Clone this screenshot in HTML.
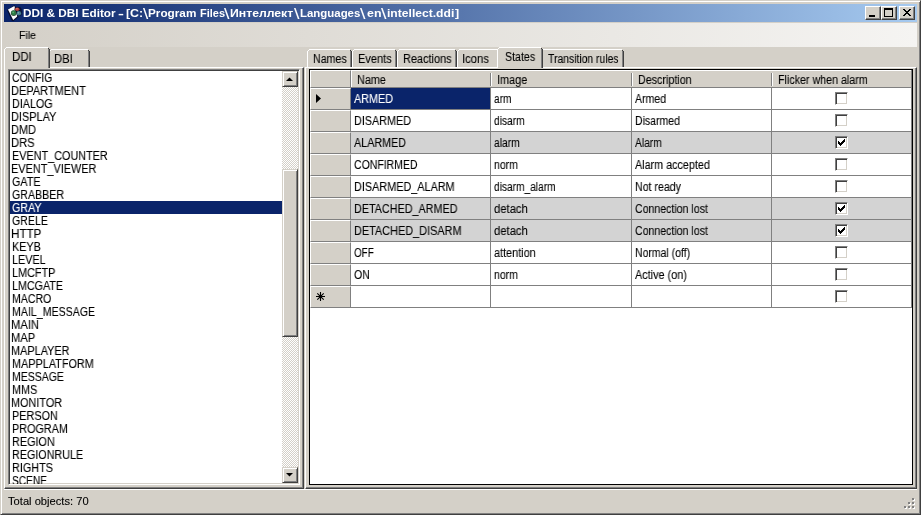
<!DOCTYPE html><html><head><meta charset="utf-8"><title>DDI &amp; DBI Editor</title><style>
*{box-sizing:border-box;margin:0;padding:0}
html,body{width:921px;height:515px;overflow:hidden;background:#d4d0c8}
body{font-family:"Liberation Sans",sans-serif;font-size:12px;color:#000;position:relative;line-height:13px}
.a{position:absolute}
.t{position:absolute;white-space:nowrap;line-height:13px;transform-origin:0 0;will-change:transform;-webkit-text-stroke:.1px}
#ttext{left:0;top:7px;height:13px;white-space:nowrap;font-size:0;line-height:13px;color:#fff}
.ts{display:inline-block;height:13px;line-height:13px;vertical-align:top;white-space:nowrap;transform-origin:0 0;will-change:transform}
#title{left:4px;top:4px;width:913px;height:18px;background:linear-gradient(to right,#0a246a,#a6caf0)}
.cb{position:absolute;top:6px;width:16px;height:14px;background:#d4d0c8;border:1px solid;border-color:#fff #404040 #404040 #fff;box-shadow:inset -1px -1px 0 #808080,inset 1px 1px 0 #d4d0c8}
#menu{left:4px;top:23px;width:913px;height:24px;background:linear-gradient(to right,#d4d0c8,#f5f4f2)}
.tab{position:absolute;background:#d4d0c8;border-top:1px solid #fff;border-left:1px solid #fff;border-right:1px solid #404040;border-radius:2px 2px 0 0;box-shadow:inset -1px 0 0 #808080}
.pane{position:absolute;border:1px solid;border-color:#fff #404040 #404040 #fff;box-shadow:inset -1px -1px 0 #808080}
#list{left:8px;top:69px;width:292px;height:416px;background:#fff;border:1px solid;border-color:#808080 #fff #fff #808080;box-shadow:inset 1px 1px 0 #404040,inset -1px -1px 0 #d4d0c8;overflow:hidden}
.sel{position:absolute;left:1px;width:272px;height:13px;background:#0a246a}
.sbtn{position:absolute;left:273px;width:16px;height:16px;background:#d4d0c8;border:1px solid;border-color:#d4d0c8 #404040 #404040 #d4d0c8;box-shadow:inset 1px 1px 0 #fff,inset -1px -1px 0 #808080}
#track{left:273px;top:1px;width:16px;height:412px;background-image:conic-gradient(#fff 25%,#d4d0c8 0 50%,#fff 0 75%,#d4d0c8 0);background-size:2px 2px}
#grid{left:309px;top:69px;width:604px;height:416px;background:#fff;border:1px solid #000;overflow:hidden}
.hc{position:absolute;background:#d4d0c8;border:1px solid;border-color:#fff #808080 #808080 #fff}
.cell{position:absolute;height:22px;border-right:1px solid #808080;border-bottom:1px solid #808080}
.chk{position:absolute;width:13px;height:13px;background:#fff;border:1px solid;border-color:#808080 #fff #fff #808080;box-shadow:inset 1px 1px 0 #404040,inset -1px -1px 0 #d4d0c8}
</style></head><body>
<div class="a" style="left:0;top:0;width:921px;height:515px;border:1px solid;border-color:#d4d0c8 #404040 #404040 #d4d0c8;box-shadow:inset 1px 1px 0 #fff,inset -1px -1px 0 #808080"></div>
<div class="a" id="title"></div>
<svg class="a" style="left:5px;top:5px" width="18" height="17" viewBox="5 5 18 17">
<polygon points="7,10 14.6,5.3 16.4,8 18.6,17 13.2,21.2 11.6,20.6" fill="#06061a" opacity="0.75"/>
<polygon points="8,9.6 14.4,6 17.2,16.4 13.2,20.1" fill="#fff"/>
<ellipse cx="19.3" cy="11.6" rx="2.6" ry="4.6" fill="#081030" opacity="0.9"/>
<ellipse cx="17.4" cy="9.3" rx="3" ry="2.4" fill="#081030" opacity="0.8"/>
<ellipse cx="17.2" cy="9.2" rx="2.3" ry="1.8" fill="#b4423a"/>
<ellipse cx="16.9" cy="8.8" rx="1.1" ry="0.7" fill="#d8766c"/>
<circle cx="18.8" cy="13.3" r="2.3" fill="#447c8c"/>
<circle cx="18.4" cy="12.8" r="0.9" fill="#7aa8b4"/>
<circle cx="13.7" cy="13.1" r="2.9" fill="#0a2412" opacity="0.8"/>
<circle cx="13.6" cy="12.9" r="2.3" fill="#2c7c42"/>
<circle cx="13.2" cy="12.3" r="0.9" fill="#5eac70"/>
</svg>
<div class="a" id="ttext"><span class="ts" style="margin-left:22.65px;width:95.20px;transform:scaleX(1.0664);font-size:11px;font-weight:bold">DDI &amp; DBI Editor</span> <span class="ts" style="width:8.17px;transform:scaleX(1.6071);font-size:11px;font-weight:bold">-</span> <span class="ts" style="width:16.67px;transform:scaleX(1.1250);font-size:11px;font-weight:bold">[C:</span><span class="ts" style="width:5.35px;transform:scaleX(1.2619);font-size:15px">\</span><span class="ts" style="width:51.55px;transform:scaleX(1.0683);font-size:11px;font-weight:bold">Program</span> <span class="ts" style="width:24.89px;transform:scaleX(0.9916);font-size:11px;font-weight:bold">Files</span><span class="ts" style="width:6.02px;transform:scaleX(1.3095);font-size:15px">\</span><span class="ts" style="width:63.48px;transform:scaleX(1.1109);font-size:11px;font-weight:bold">Интеллект</span><span class="ts" style="width:5.97px;transform:scaleX(1.3095);font-size:15px">\</span><span class="ts" style="width:60.03px;transform:scaleX(1.0387);font-size:11px;font-weight:bold">Languages</span><span class="ts" style="width:7.35px;transform:scaleX(1.3095);font-size:15px">\</span><span class="ts" style="width:14.15px;transform:scaleX(1.1282);font-size:11px;font-weight:bold">en</span><span class="ts" style="width:5.62px;transform:scaleX(1.3095);font-size:15px">\</span><span class="ts" style="width:67.77px;transform:scaleX(1.1007);font-size:11px;font-weight:bold">intellect.ddi</span><span class="ts" style="width:6.00px;transform:scaleX(1.1379);font-size:11px;font-weight:bold">]</span></div>
<div class="cb" style="left:865px"><svg class="a" style="left:0;top:0" width="14" height="12"><rect x="3" y="8" width="6" height="2" fill="#000"/></svg></div>
<div class="cb" style="left:881px"><svg class="a" style="left:0;top:0" width="14" height="12"><rect x="2.5" y="1.5" width="8" height="8" fill="none" stroke="#000" stroke-width="1"/><rect x="2" y="1" width="9" height="2" fill="#000"/></svg></div>
<div class="cb" style="left:899px"><svg class="a" style="left:0;top:0" width="14" height="12" shape-rendering="crispEdges"><path d="M3,2h2v1h-2zM9,2h2v1h-2zM4,3h2v1h-2zM8,3h2v1h-2zM5,4h4v1h-4zM6,5h2v1h-2zM5,6h4v1h-4zM4,7h2v1h-2zM8,7h2v1h-2zM3,8h2v1h-2zM9,8h2v1h-2z" fill="#000"/></svg></div>
<div class="a" id="menu"></div>
<div class="t" style="left:18.84px;top:29px;transform:scaleX(0.9571);font-size:11px">File</div>
<div class="pane" style="left:4px;top:67px;width:300px;height:422px"></div>
<svg class="a" style="left:49px;top:49px" width="41" height="18" shape-rendering="crispEdges"><polygon points="0,2 2,0 39,0 41,2 41,18 0,18" fill="#d4d0c8"/><rect x="2" y="0" width="37" height="1" fill="#fff"/><rect x="1" y="1" width="1" height="1" fill="#fff"/><rect x="0" y="2" width="1" height="16" fill="#fff"/><rect x="39" y="2" width="1" height="16" fill="#808080"/><rect x="40" y="2" width="1" height="16" fill="#404040"/><rect x="39" y="1" width="1" height="1" fill="#404040"/></svg>
<div class="t" style="left:53.87px;top:53px;transform:scaleX(0.9330)">DBI</div>
<svg class="a" style="left:4px;top:47px" width="46" height="21" shape-rendering="crispEdges"><polygon points="0,2 2,0 44,0 46,2 46,21 0,21" fill="#d4d0c8"/><rect x="2" y="0" width="42" height="1" fill="#fff"/><rect x="1" y="1" width="1" height="1" fill="#fff"/><rect x="0" y="2" width="1" height="19" fill="#fff"/><rect x="44" y="2" width="1" height="19" fill="#808080"/><rect x="45" y="2" width="1" height="19" fill="#404040"/><rect x="44" y="1" width="1" height="1" fill="#404040"/></svg>
<div class="t" style="left:11.74px;top:51px;transform:scaleX(0.9568)">DDI</div>
<div class="a" id="list">
<div class="sel" style="top:131px"></div>
<div class="t" style="left:2.88px;top:2px;transform:scaleX(0.8625)">CONFIG</div>
<div class="t" style="left:2.48px;top:15px;transform:scaleX(0.9178)">DEPARTMENT</div>
<div class="t" style="left:2.50px;top:28px;transform:scaleX(0.8963)">DIALOG</div>
<div class="t" style="left:2.49px;top:41px;transform:scaleX(0.9113)">DISPLAY</div>
<div class="t" style="left:2.49px;top:54px;transform:scaleX(0.9109)">DMD</div>
<div class="t" style="left:2.47px;top:67px;transform:scaleX(0.9328)">DRS</div>
<div class="t" style="left:2.50px;top:80px;transform:scaleX(0.9033)">EVENT_COUNTER</div>
<div class="t" style="left:2.49px;top:93px;transform:scaleX(0.9092)">EVENT_VIEWER</div>
<div class="t" style="left:2.86px;top:106px;transform:scaleX(0.8990)">GATE</div>
<div class="t" style="left:2.87px;top:119px;transform:scaleX(0.8870)">GRABBER</div>
<div class="t" style="left:2.86px;top:132px;transform:scaleX(0.8944);color:#fff">GRAY</div>
<div class="t" style="left:2.87px;top:145px;transform:scaleX(0.8813)">GRELE</div>
<div class="t" style="left:2.43px;top:158px;transform:scaleX(0.9697)">HTTP</div>
<div class="t" style="left:2.50px;top:171px;transform:scaleX(0.9013)">KEYB</div>
<div class="t" style="left:2.50px;top:184px;transform:scaleX(0.8972)">LEVEL</div>
<div class="t" style="left:2.50px;top:197px;transform:scaleX(0.9030)">LMCFTP</div>
<div class="t" style="left:2.51px;top:210px;transform:scaleX(0.8939)">LMCGATE</div>
<div class="t" style="left:2.52px;top:223px;transform:scaleX(0.8794)">MACRO</div>
<div class="t" style="left:2.52px;top:236px;transform:scaleX(0.8832)">MAIL_MESSAGE</div>
<div class="t" style="left:2.46px;top:249px;transform:scaleX(0.9357)">MAIN</div>
<div class="t" style="left:2.47px;top:262px;transform:scaleX(0.9303)">MAP</div>
<div class="t" style="left:2.49px;top:275px;transform:scaleX(0.9078)">MAPLAYER</div>
<div class="t" style="left:2.50px;top:288px;transform:scaleX(0.9040)">MAPPLATFORM</div>
<div class="t" style="left:2.53px;top:301px;transform:scaleX(0.8739)">MESSAGE</div>
<div class="t" style="left:2.50px;top:314px;transform:scaleX(0.9019)">MMS</div>
<div class="t" style="left:2.49px;top:327px;transform:scaleX(0.9053)">MONITOR</div>
<div class="t" style="left:2.50px;top:340px;transform:scaleX(0.9035)">PERSON</div>
<div class="t" style="left:2.50px;top:353px;transform:scaleX(0.9017)">PROGRAM</div>
<div class="t" style="left:2.50px;top:366px;transform:scaleX(0.9031)">REGION</div>
<div class="t" style="left:2.50px;top:379px;transform:scaleX(0.8972)">REGIONRULE</div>
<div class="t" style="left:2.50px;top:392px;transform:scaleX(0.9041)">RIGHTS</div>
<div class="t" style="left:2.89px;top:405px;transform:scaleX(0.8458)">SCENE</div>
<div class="a" id="track"></div>
<div class="sbtn" style="top:1px"><svg class="a" style="left:0;top:0" width="14" height="14"><polygon points="3,9 10,9 6.5,5.5" fill="#000"/></svg></div>
<div class="sbtn" style="top:99px;height:168px"></div>
<div class="sbtn" style="top:397px"><svg class="a" style="left:0;top:0" width="14" height="14"><polygon points="3,5 10,5 6.5,8.5" fill="#000"/></svg></div>
</div>
<div class="pane" style="left:305px;top:67px;width:612px;height:422px"></div>
<svg class="a" style="left:307px;top:49px" width="45" height="18" shape-rendering="crispEdges"><polygon points="0,2 2,0 43,0 45,2 45,18 0,18" fill="#d4d0c8"/><rect x="2" y="0" width="41" height="1" fill="#fff"/><rect x="1" y="1" width="1" height="1" fill="#fff"/><rect x="0" y="2" width="1" height="16" fill="#fff"/><rect x="43" y="2" width="1" height="16" fill="#808080"/><rect x="44" y="2" width="1" height="16" fill="#404040"/><rect x="43" y="1" width="1" height="1" fill="#404040"/></svg>
<div class="t" style="left:312.71px;top:53px;transform:scaleX(0.8880)">Names</div>
<svg class="a" style="left:352px;top:49px" width="45" height="18" shape-rendering="crispEdges"><polygon points="0,2 2,0 43,0 45,2 45,18 0,18" fill="#d4d0c8"/><rect x="2" y="0" width="41" height="1" fill="#fff"/><rect x="1" y="1" width="1" height="1" fill="#fff"/><rect x="0" y="2" width="1" height="16" fill="#fff"/><rect x="43" y="2" width="1" height="16" fill="#808080"/><rect x="44" y="2" width="1" height="16" fill="#404040"/><rect x="43" y="1" width="1" height="1" fill="#404040"/></svg>
<div class="t" style="left:357.88px;top:53px;transform:scaleX(0.9178)">Events</div>
<svg class="a" style="left:397px;top:49px" width="60" height="18" shape-rendering="crispEdges"><polygon points="0,2 2,0 58,0 60,2 60,18 0,18" fill="#d4d0c8"/><rect x="2" y="0" width="56" height="1" fill="#fff"/><rect x="1" y="1" width="1" height="1" fill="#fff"/><rect x="0" y="2" width="1" height="16" fill="#fff"/><rect x="58" y="2" width="1" height="16" fill="#808080"/><rect x="59" y="2" width="1" height="16" fill="#404040"/><rect x="58" y="1" width="1" height="1" fill="#404040"/></svg>
<div class="t" style="left:402.69px;top:53px;transform:scaleX(0.9115)">Reactions</div>
<svg class="a" style="left:457px;top:49px" width="42" height="18" shape-rendering="crispEdges"><polygon points="0,2 2,0 40,0 42,2 42,18 0,18" fill="#d4d0c8"/><rect x="2" y="0" width="38" height="1" fill="#fff"/><rect x="1" y="1" width="1" height="1" fill="#fff"/><rect x="0" y="2" width="1" height="16" fill="#fff"/><rect x="40" y="2" width="1" height="16" fill="#808080"/><rect x="41" y="2" width="1" height="16" fill="#404040"/><rect x="40" y="1" width="1" height="1" fill="#404040"/></svg>
<div class="t" style="left:462.47px;top:53px;transform:scaleX(0.9375)">Icons</div>
<svg class="a" style="left:541px;top:49px" width="83" height="18" shape-rendering="crispEdges"><polygon points="0,2 2,0 81,0 83,2 83,18 0,18" fill="#d4d0c8"/><rect x="2" y="0" width="79" height="1" fill="#fff"/><rect x="1" y="1" width="1" height="1" fill="#fff"/><rect x="0" y="2" width="1" height="16" fill="#fff"/><rect x="81" y="2" width="1" height="16" fill="#808080"/><rect x="82" y="2" width="1" height="16" fill="#404040"/><rect x="81" y="1" width="1" height="1" fill="#404040"/></svg>
<div class="t" style="left:547.84px;top:53px;transform:scaleX(0.8640)">Transition rules</div>
<svg class="a" style="left:497px;top:47px" width="46" height="21" shape-rendering="crispEdges"><polygon points="0,2 2,0 44,0 46,2 46,21 0,21" fill="#d4d0c8"/><rect x="2" y="0" width="42" height="1" fill="#fff"/><rect x="1" y="1" width="1" height="1" fill="#fff"/><rect x="0" y="2" width="1" height="19" fill="#fff"/><rect x="44" y="2" width="1" height="19" fill="#808080"/><rect x="45" y="2" width="1" height="19" fill="#404040"/><rect x="44" y="1" width="1" height="1" fill="#404040"/></svg>
<div class="t" style="left:505.17px;top:51px;transform:scaleX(0.8879)">States</div>
<div class="a" id="grid">
<div class="a" style="left:0;top:0;width:602px;height:18px;background:#d4d0c8;border-top:1px solid #fff;border-bottom:1px solid #808080"></div>
<div class="hc" style="left:0;top:0;width:41px;height:18px"></div>
<div class="a" style="left:41px;top:0;width:1px;height:17px;background:#fff"></div>
<div class="a" style="left:601px;top:0;width:1px;height:18px;background:#808080"></div>
<div class="a" style="left:180px;top:3px;width:2px;height:13px;background:#fff;border-left:1px solid #808080"></div>
<div class="t" style="left:46.60px;top:4px;transform:scaleX(0.9046)">Name</div>
<div class="a" style="left:321px;top:3px;width:2px;height:13px;background:#fff;border-left:1px solid #808080"></div>
<div class="t" style="left:187.00px;top:4px;transform:scaleX(0.9085)">Image</div>
<div class="a" style="left:461px;top:3px;width:2px;height:13px;background:#fff;border-left:1px solid #808080"></div>
<div class="t" style="left:327.81px;top:4px;transform:scaleX(0.8935)">Description</div>
<div class="t" style="left:467.61px;top:4px;transform:scaleX(0.8908)">Flicker when alarm</div>
<div class="hc" style="left:0;top:18px;width:41px;height:22px">
<svg class="a" style="left:5px;top:5px" width="6" height="10"><polygon points="0,0 0,9 5,4.5" fill="#000"/></svg>
</div>
<div class="cell" style="left:41px;top:18px;width:140px;background:#0a246a"></div>
<div class="cell" style="left:181px;top:18px;width:141px;background:#fff"></div>
<div class="cell" style="left:322px;top:18px;width:140px;background:#fff"></div>
<div class="cell" style="left:462px;top:18px;width:140px;background:#fff"><div class="chk" style="left:63px;top:4px"></div></div>
<div class="t" style="left:43.80px;top:23px;transform:scaleX(0.8995);color:#fff">ARMED</div>
<div class="t" style="left:184.38px;top:23px;transform:scaleX(0.8402)">arm</div>
<div class="t" style="left:325.00px;top:23px;transform:scaleX(0.8786)">Armed</div>
<div class="hc" style="left:0;top:40px;width:41px;height:22px">
</div>
<div class="cell" style="left:41px;top:40px;width:140px;background:#fff"></div>
<div class="cell" style="left:181px;top:40px;width:141px;background:#fff"></div>
<div class="cell" style="left:322px;top:40px;width:140px;background:#fff"></div>
<div class="cell" style="left:462px;top:40px;width:140px;background:#fff"><div class="chk" style="left:63px;top:4px"></div></div>
<div class="t" style="left:43.80px;top:45px;transform:scaleX(0.8997)">DISARMED</div>
<div class="t" style="left:184.37px;top:45px;transform:scaleX(0.8501)">disarm</div>
<div class="t" style="left:325.02px;top:45px;transform:scaleX(0.8750)">Disarmed</div>
<div class="hc" style="left:0;top:62px;width:41px;height:22px">
</div>
<div class="cell" style="left:41px;top:62px;width:140px;background:#d3d3d3"></div>
<div class="cell" style="left:181px;top:62px;width:141px;background:#d3d3d3"></div>
<div class="cell" style="left:322px;top:62px;width:140px;background:#d3d3d3"></div>
<div class="cell" style="left:462px;top:62px;width:140px;background:#d3d3d3"><div class="chk" style="left:63px;top:4px"><svg class="a" style="left:2px;top:2px" width="7" height="7" shape-rendering="crispEdges"><path d="M0,2h1v3h-1zM1,3h1v3h-1zM2,4h1v3h-1zM3,3h1v3h-1zM4,2h1v3h-1zM5,1h1v3h-1zM6,0h1v3h-1z" fill="#000"/></svg></div></div>
<div class="t" style="left:43.80px;top:67px;transform:scaleX(0.8974)">ALARMED</div>
<div class="t" style="left:184.37px;top:67px;transform:scaleX(0.8571)">alarm</div>
<div class="t" style="left:325.00px;top:67px;transform:scaleX(0.8557)">Alarm</div>
<div class="hc" style="left:0;top:84px;width:41px;height:22px">
</div>
<div class="cell" style="left:41px;top:84px;width:140px;background:#fff"></div>
<div class="cell" style="left:181px;top:84px;width:141px;background:#fff"></div>
<div class="cell" style="left:322px;top:84px;width:140px;background:#fff"></div>
<div class="cell" style="left:462px;top:84px;width:140px;background:#fff"><div class="chk" style="left:63px;top:4px"></div></div>
<div class="t" style="left:44.18px;top:89px;transform:scaleX(0.8741)">CONFIRMED</div>
<div class="t" style="left:184.10px;top:89px;transform:scaleX(0.8755)">norm</div>
<div class="t" style="left:325.00px;top:89px;transform:scaleX(0.8983)">Alarm accepted</div>
<div class="hc" style="left:0;top:106px;width:41px;height:22px">
</div>
<div class="cell" style="left:41px;top:106px;width:140px;background:#fff"></div>
<div class="cell" style="left:181px;top:106px;width:141px;background:#fff"></div>
<div class="cell" style="left:322px;top:106px;width:140px;background:#fff"></div>
<div class="cell" style="left:462px;top:106px;width:140px;background:#fff"><div class="chk" style="left:63px;top:4px"></div></div>
<div class="t" style="left:43.80px;top:111px;transform:scaleX(0.9040)">DISARMED_ALARM</div>
<div class="t" style="left:184.38px;top:111px;transform:scaleX(0.8473)">disarm_alarm</div>
<div class="t" style="left:325.02px;top:111px;transform:scaleX(0.8843)">Not ready</div>
<div class="hc" style="left:0;top:128px;width:41px;height:22px">
</div>
<div class="cell" style="left:41px;top:128px;width:140px;background:#d3d3d3"></div>
<div class="cell" style="left:181px;top:128px;width:141px;background:#d3d3d3"></div>
<div class="cell" style="left:322px;top:128px;width:140px;background:#d3d3d3"></div>
<div class="cell" style="left:462px;top:128px;width:140px;background:#d3d3d3"><div class="chk" style="left:63px;top:4px"><svg class="a" style="left:2px;top:2px" width="7" height="7" shape-rendering="crispEdges"><path d="M0,2h1v3h-1zM1,3h1v3h-1zM2,4h1v3h-1zM3,3h1v3h-1zM4,2h1v3h-1zM5,1h1v3h-1zM6,0h1v3h-1z" fill="#000"/></svg></div></div>
<div class="t" style="left:43.80px;top:133px;transform:scaleX(0.8988)">DETACHED_ARMED</div>
<div class="t" style="left:184.33px;top:133px;transform:scaleX(0.9397)">detach</div>
<div class="t" style="left:325.37px;top:133px;transform:scaleX(0.8805)">Connection lost</div>
<div class="hc" style="left:0;top:150px;width:41px;height:22px">
</div>
<div class="cell" style="left:41px;top:150px;width:140px;background:#d3d3d3"></div>
<div class="cell" style="left:181px;top:150px;width:141px;background:#d3d3d3"></div>
<div class="cell" style="left:322px;top:150px;width:140px;background:#d3d3d3"></div>
<div class="cell" style="left:462px;top:150px;width:140px;background:#d3d3d3"><div class="chk" style="left:63px;top:4px"><svg class="a" style="left:2px;top:2px" width="7" height="7" shape-rendering="crispEdges"><path d="M0,2h1v3h-1zM1,3h1v3h-1zM2,4h1v3h-1zM3,3h1v3h-1zM4,2h1v3h-1zM5,1h1v3h-1zM6,0h1v3h-1z" fill="#000"/></svg></div></div>
<div class="t" style="left:43.79px;top:155px;transform:scaleX(0.9082)">DETACHED_DISARM</div>
<div class="t" style="left:184.33px;top:155px;transform:scaleX(0.9397)">detach</div>
<div class="t" style="left:325.37px;top:155px;transform:scaleX(0.8805)">Connection lost</div>
<div class="hc" style="left:0;top:172px;width:41px;height:22px">
</div>
<div class="cell" style="left:41px;top:172px;width:140px;background:#fff"></div>
<div class="cell" style="left:181px;top:172px;width:141px;background:#fff"></div>
<div class="cell" style="left:322px;top:172px;width:140px;background:#fff"></div>
<div class="cell" style="left:462px;top:172px;width:140px;background:#fff"><div class="chk" style="left:63px;top:4px"></div></div>
<div class="t" style="left:44.21px;top:177px;transform:scaleX(0.8210)">OFF</div>
<div class="t" style="left:184.35px;top:177px;transform:scaleX(0.9062)">attention</div>
<div class="t" style="left:325.03px;top:177px;transform:scaleX(0.8730)">Normal (off)</div>
<div class="hc" style="left:0;top:194px;width:41px;height:22px">
</div>
<div class="cell" style="left:41px;top:194px;width:140px;background:#fff"></div>
<div class="cell" style="left:181px;top:194px;width:141px;background:#fff"></div>
<div class="cell" style="left:322px;top:194px;width:140px;background:#fff"></div>
<div class="cell" style="left:462px;top:194px;width:140px;background:#fff"><div class="chk" style="left:63px;top:4px"></div></div>
<div class="t" style="left:44.17px;top:199px;transform:scaleX(0.8841)">ON</div>
<div class="t" style="left:184.10px;top:199px;transform:scaleX(0.8755)">norm</div>
<div class="t" style="left:325.00px;top:199px;transform:scaleX(0.9048)">Active (on)</div>
<div class="hc" style="left:0;top:216px;width:41px;height:22px">
<svg class="a" style="left:5px;top:5px" width="10" height="10"><path d="M4.5,0V9M0,4.5H9M1.3,1.3L7.7,7.7M7.7,1.3L1.3,7.7" stroke="#000" stroke-width="1.1" fill="none"/><rect x="3" y="3" width="3" height="3" fill="#000"/></svg>
</div>
<div class="cell" style="left:41px;top:216px;width:140px;background:#fff"></div>
<div class="cell" style="left:181px;top:216px;width:141px;background:#fff"></div>
<div class="cell" style="left:322px;top:216px;width:140px;background:#fff"></div>
<div class="cell" style="left:462px;top:216px;width:140px;background:#fff"><div class="chk" style="left:63px;top:4px"></div></div>
</div>
<div class="a" style="left:4px;top:489px;width:913px;height:1px;background:#fff"></div>
<div class="t" style="left:7.90px;top:495px;transform:scaleX(1.0139);font-size:11px">Total objects: 70</div>
<svg class="a" style="left:903px;top:497px" width="13" height="13" shape-rendering="crispEdges"><rect x="10" y="2" width="2" height="2" fill="#fff"/><rect x="9" y="1" width="2" height="2" fill="#808080"/><rect x="6" y="6" width="2" height="2" fill="#fff"/><rect x="5" y="5" width="2" height="2" fill="#808080"/><rect x="10" y="6" width="2" height="2" fill="#fff"/><rect x="9" y="5" width="2" height="2" fill="#808080"/><rect x="2" y="10" width="2" height="2" fill="#fff"/><rect x="1" y="9" width="2" height="2" fill="#808080"/><rect x="6" y="10" width="2" height="2" fill="#fff"/><rect x="5" y="9" width="2" height="2" fill="#808080"/><rect x="10" y="10" width="2" height="2" fill="#fff"/><rect x="9" y="9" width="2" height="2" fill="#808080"/></svg>
</body></html>
